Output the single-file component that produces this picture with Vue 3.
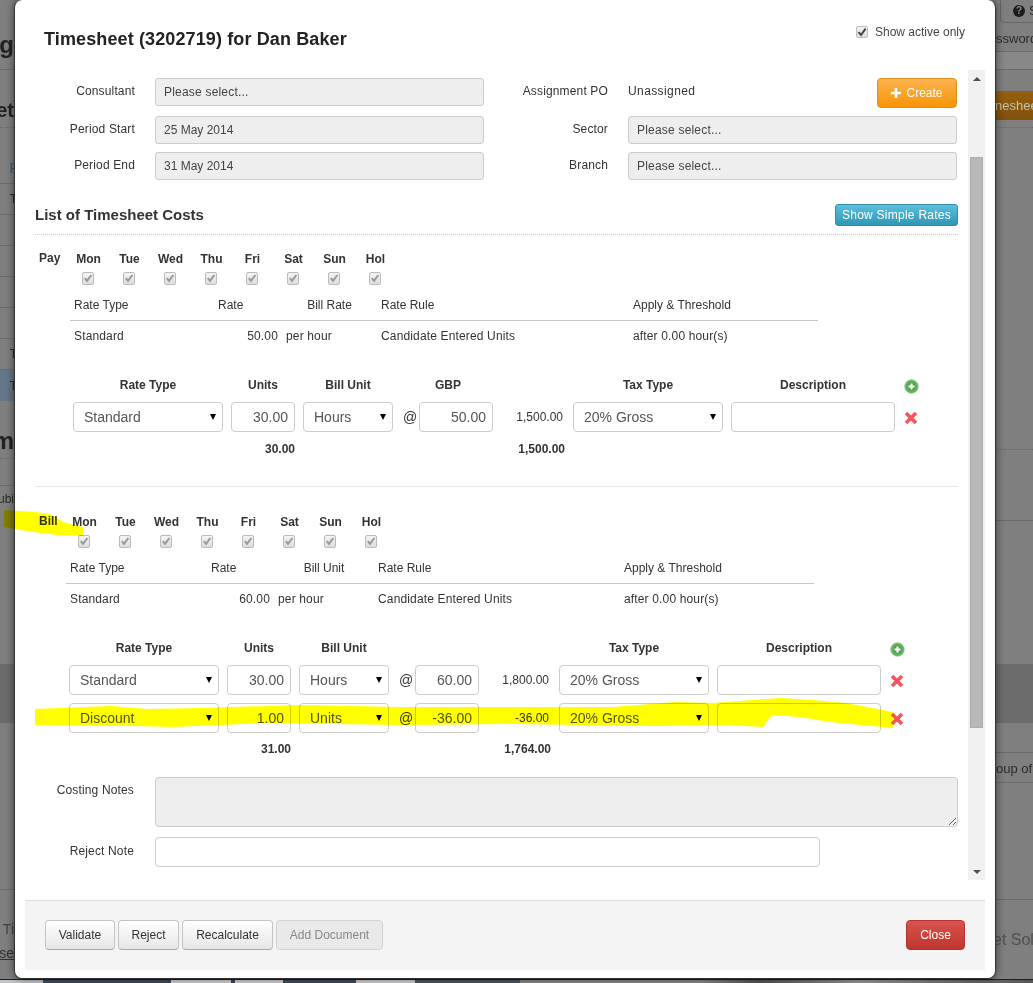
<script setup>
const days = ['Mon', 'Tue', 'Wed', 'Thu', 'Fri', 'Sat', 'Sun', 'Hol']

const blocks = [
  {
    key: 'pay', label: 'Pay', rateHead: 'Bill Rate', rate: '50.00', ccy: 'GBP',
    lines: [{ type: 'Standard', units: '30.00', unit: 'Hours', rate: '50.00', amount: '1,500.00' }],
    totalUnits: '30.00', total: '1,500.00'
  },
  {
    key: 'bill', label: 'Bill', rateHead: 'Bill Unit', rate: '60.00', ccy: '',
    lines: [
      { type: 'Standard', units: '30.00', unit: 'Hours', rate: '60.00', amount: '1,800.00' },
      { type: 'Discount', units: '1.00', unit: 'Units', rate: '-36.00', amount: '-36.00' }
    ],
    totalUnits: '31.00', total: '1,764.00'
  }
]

const leftStrip = [
  { h: 30 }, { h: 30, t: 'ng', c: 'big' }, { h: 10, c: 'line' },
  { h: 25 }, { h: 30, t: 'et', c: 'mid' }, { h: 3, c: 'dots' },
  { h: 28 }, { h: 24, t: 'F', c: 'link' }, { h: 4, c: 'line' },
  { h: 31, a: '2', t: 'T', c: 'row line' },
  { h: 31, a: '4', c: 'row line' },
  { h: 31, a: '6', c: 'row line' },
  { h: 31, a: '1', t: '·', c: 'row line' },
  { h: 31, a: '2', c: 'row line' },
  { h: 31, a: '2', t: 'T', c: 'row line' },
  { h: 31, a: '2', t: 'T', c: 'row selrow' },
  { h: 25 }, { h: 30, t: 'm', c: 'big' }, { h: 3, c: 'dots' },
  { h: 27, c: 'line' },
  { h: 26, t: 'ubi', c: 'txt' },
  { h: 152 },
  { h: 59, c: 'band line' },
  { h: 167, c: 'line' },
  { h: 28 }, { h: 22, t: 'Ti', c: 'fade' }, { h: 26, t: 'se', c: 'under' }
]

const rightStrip = [
  { h: 23, c: 'tab', help: true, t: 'S' },
  { h: 29, t: 'ssword', c: 'r-txt line' },
  { h: 18, c: 'lite line' },
  { h: 21 },
  { h: 29, t: 'neshee', c: 'orange' },
  { h: 8, c: 'dots' },
  { h: 322, c: 'dots' },
  { h: 71, c: 'line' },
  { h: 143 },
  { h: 59, c: 'band line' },
  { h: 30, c: 'line' },
  { h: 30, t: 'oup of i', c: 'r-txt line' },
  { h: 117, c: 'line' },
  { h: 22 }, { h: 36, t: 'et Sol', c: 'r-big' }
]
</script>

<template>
  <div class="screen">
    <div class="stage">
      <aside class="strip strip-left">
        <div v-for="(s, i) in leftStrip" :key="i" class="seg" :class="s.c" :style="{ height: s.h + 'px' }">
          <span v-if="s.a" class="digit">{{ s.a }}</span>
          <span v-if="s.t">{{ s.t }}</span>
        </div>
      </aside>

      <main class="modal">
        <header class="modal-head">
          <h3>Timesheet (3202719) for Dan Baker</h3>
          <label class="active-only">
            <span class="check on">
              <svg viewBox="0 0 12 12"><path d="M2.5 6.2 5 9 9.6 2.6" /></svg>
            </span>
            Show active only
          </label>
        </header>

        <div class="modal-body">
          <div class="content">
            <section class="form">
              <label>Consultant</label>
              <div class="field">Please select...</div>
              <label>Assignment PO</label>
              <div class="po">
                <span>Unassigned</span>
                <button class="btn orange-btn">
                  <svg viewBox="0 0 10 10"><path d="M5 0v10M0 5h10" /></svg>
                  Create
                </button>
              </div>

              <label>Period Start</label>
              <div class="field date">25 May 2014</div>
              <label>Sector</label>
              <div class="field">Please select...</div>

              <label>Period End</label>
              <div class="field date">31 May 2014</div>
              <label>Branch</label>
              <div class="field">Please select...</div>
            </section>

            <div class="section-head">
              <h4>List of Timesheet Costs</h4>
              <button class="btn info-btn">Show Simple Rates</button>
            </div>

            <template v-for="(b, bi) in blocks" :key="b.key">
              <hr v-if="bi" class="sep" />
              <section class="block" :class="b.key">
                <div class="days-row">
                  <strong class="block-label">{{ b.label }}</strong>
                  <div class="days">
                    <div v-for="d in days" :key="d" class="day">
                      <b>{{ d }}</b>
                      <span class="check">
                        <svg viewBox="0 0 12 12"><path d="M2.8 6.2 5 8.8 9.4 3" /></svg>
                      </span>
                    </div>
                  </div>
                </div>

                <div class="rates">
                  <div class="rh">Rate Type</div>
                  <div class="rh">Rate</div>
                  <div class="rh center">{{ b.rateHead }}</div>
                  <div class="rh">Rate Rule</div>
                  <div class="rh">Apply &amp; Threshold</div>
                  <div class="rd">Standard</div>
                  <div class="rd right">{{ b.rate }}</div>
                  <div class="rd">per hour</div>
                  <div class="rd">Candidate Entered Units</div>
                  <div class="rd">after 0.00 hour(s)</div>
                </div>

                <div class="entries">
                  <b class="eh">Rate Type</b>
                  <b class="eh">Units</b>
                  <b class="eh">Bill Unit</b>
                  <span></span>
                  <b class="eh ccy">{{ b.ccy }}</b>
                  <span></span>
                  <b class="eh">Tax Type</b>
                  <b class="eh">Description</b>
                  <span class="icon-cell add">
                    <svg viewBox="0 0 16 16" width="15" height="15">
                      <circle cx="8" cy="8" r="7.2" fill="#63b163" stroke="#8fcb8f" />
                      <circle cx="8" cy="8" r="4.6" fill="#4f9f4f" />
                      <path d="M8 4.8v6.4M4.8 8h6.4" stroke="#fff" stroke-width="2.2" />
                    </svg>
                  </span>

                  <template v-for="l in b.lines" :key="l.type">
                    <div class="cell"><div class="sel">{{ l.type }}<i></i></div></div>
                    <div class="cell"><input class="inp" :value="l.units" readonly /></div>
                    <div class="sel">{{ l.unit }}<i></i></div>
                    <span class="at">@</span>
                    <input class="inp" :value="l.rate" readonly />
                    <span class="amount">{{ l.amount }}</span>
                    <div class="cell"><div class="sel">20% Gross<i></i></div></div>
                    <input class="inp" value="" readonly />
                    <span class="icon-cell del">
                      <svg viewBox="0 0 14 14" width="14" height="14">
                        <path d="M2 2l10 10M12 2 2 12" stroke="#f4545c" stroke-width="3.6" />
                      </svg>
                    </span>
                  </template>

                  <span></span>
                  <b class="tot">{{ b.totalUnits }}</b>
                  <span></span><span></span><span></span>
                  <b class="tot">{{ b.total }}</b>
                </div>
              </section>
            </template>

            <section class="notes">
              <label>Costing Notes</label>
              <textarea class="note-area" readonly></textarea>
              <label class="mid-label">Reject Note</label>
              <input class="note-input" readonly />
            </section>
          </div>

          <div class="scrollbar">
            <i class="arrow up"></i>
            <div class="thumb"></div>
            <i class="arrow down"></i>
          </div>
        </div>

        <footer class="modal-foot">
          <div class="foot-left">
            <button class="btn w-validate">Validate</button>
            <button class="btn w-reject">Reject</button>
            <button class="btn w-recalc">Recalculate</button>
            <button class="btn disabled w-add">Add Document</button>
          </div>
          <button class="btn danger-btn">Close</button>
        </footer>
      </main>

      <aside class="strip strip-right">
        <div v-for="(s, i) in rightStrip" :key="i" class="seg" :class="s.c" :style="{ height: s.h + 'px' }">
          <span v-if="s.help" class="help">?</span>
          <span v-if="s.t">{{ s.t }}</span>
        </div>
      </aside>
    </div>

    <div class="taskbar"></div>

    <svg class="marker" viewBox="0 0 1033 983" width="1033" height="983">
      <polygon points="4,510 35,512 50,514 63,522 83,527 83,536 57,535 33,532 15,529 4,527" />
      <polygon points="35,709 110,706 147,709 200,708 300,705 400,707 613,707 676,702 713,703 780,698 813,700 846,703 893,712 893,728 830,722 800,717 772,715 763,727 726,725 656,726 513,724 400,725 267,723 173,727 133,726 35,725" />
    </svg>
  </div>
</template>

<style>
html, body { margin: 0; padding: 0; background: #7d7d7d; }
</style>

<style scoped>
.screen {
  position: relative;
  width: 1033px;
  height: 983px;
  overflow: hidden;
  font-family: "Liberation Sans", Arial, sans-serif;
  font-size: 12px;
  color: #333;
  background: #7d7d7d;
}
.stage { display: flex; height: 979px; }

/* page dimmed behind the dialog */
.strip { flex: none; overflow: hidden; background: #7f7f7f; color: #262626; }
.strip-left { width: 14px; }
.strip-right { width: 37px; }
.seg { box-sizing: border-box; display: flex; align-items: center; white-space: nowrap; overflow: hidden; }
.strip-left .seg { justify-content: flex-end; }
.line { border-bottom: 1px solid #6b6b6b; }
.dots { border-bottom: 1px dotted #666; }
.big { font-size: 24px; font-weight: bold; color: #222; }
.mid { font-size: 20px; font-weight: bold; color: #222; }
.link { color: #34607f; font-size: 14px; padding-right: 0; }
.link span { margin-right: -4px; }
.strip-left .row { color: #2a2a2a; justify-content: space-between; }
.row span:last-child:not(.digit) { margin-right: -3px; }
.digit { color: #2c6a94; margin-left: -6px; }
.selrow { background: #647788; }
.txt { color: #2b2b2b; }
.band { background: #6c6c6c; }
.fade { color: #454545; font-size: 14px; }
.under { color: #333; font-size: 14px; text-decoration: underline; }
.tab { border: 1px solid #666; border-top: 0; border-right: 0; border-radius: 0 0 0 5px; margin-left: 4px; padding-left: 12px; gap: 4px; color: #222; }
.help { width: 12px; height: 12px; flex: none; border-radius: 50%; background: #1c1c1c; color: #8a8a8a; font: bold 10px/12px "Liberation Sans", sans-serif; text-align: center; }
.r-txt { font-size: 13px; color: #2a2a2a; padding-top: 2px; }
.lite { background: #888; }
.orange { background: linear-gradient(#94600f, #80520c); color: #c8c0a8; font-size: 13px; margin-left: -1px; }
.r-big { font-size: 16px; color: #505050; margin-left: -3px; }

/* dialog */
.modal {
  flex: none;
  box-sizing: border-box;
  width: 982px;
  height: 979px;
  display: flex;
  flex-direction: column;
  position: relative;
  z-index: 1;
  background: #fff;
  border: 1px solid #333;
  border-top: 0;
  border-radius: 8px;
  box-shadow: 0 0 8px rgba(0, 0, 0, .55);
}
.modal-head {
  height: 70px;
  flex: none;
  box-sizing: border-box;
  display: flex;
  justify-content: space-between;
  padding: 0 30px 0 29px;
}
.modal-head h3 { margin: 28px 0 0; font-size: 18px; line-height: 22px; color: #222; letter-spacing: .12px; }
.active-only { display: flex; align-items: center; gap: 7px; height: 14px; margin-top: 25px; color: #444; }

.check {
  box-sizing: border-box;
  display: block;
  width: 12px;
  height: 12px;
  background: linear-gradient(#f4f4f4, #dedede);
  border: 1px solid #bbb;
  border-radius: 2px;
}
.check svg { display: block; width: 12px; height: 12px; margin: -1px; fill: none; stroke: #999; stroke-width: 2; }
.check.on svg { stroke: #444; }

.modal-body { flex: none; height: 810px; margin: 0 10px; display: flex; }
.content { flex: none; width: 943px; box-sizing: border-box; padding: 8px 0 0 10px; overflow: hidden; }

.form {
  display: grid;
  row-gap: 8px;
  width: 923px;
  grid-template-columns: 120px 329px 144px 329px;
}
.form label { padding-right: 20px; text-align: right; line-height: 27px; letter-spacing: .15px; }
.field {
  box-sizing: border-box;
  height: 28px;
  padding-left: 8px;
  line-height: 26px;
  background: #eee;
  border: 1px solid #ccc;
  border-radius: 3px;
  color: #444;
  letter-spacing: .2px;
}
.field.date { letter-spacing: 0; }
.po { display: flex; justify-content: space-between; height: 30px; line-height: 27px; letter-spacing: .4px; }

.btn {
  box-sizing: border-box;
  height: 30px;
  padding: 0;
  font: 12px "Liberation Sans", Arial, sans-serif;
  color: #333;
  background: linear-gradient(#fff, #e6e6e6);
  border: 1px solid #c4c4c4;
  border-bottom-color: #a8a8a8;
  border-radius: 4px;
}
.w-validate { width: 70px; }
.w-reject { width: 61px; }
.w-recalc { width: 91px; }
.w-add { width: 107px; }
.btn.disabled { background: #e9e9e9; color: #888; border-color: #d2d2d2; }
.orange-btn {
  display: flex;
  align-items: center;
  justify-content: center;
  gap: 5px;
  width: 80px;
  color: #fff;
  letter-spacing: 0;
  background: linear-gradient(#fbb450, #f89406);
  border-color: #e0901a;
}
.orange-btn svg { width: 10px; height: 10px; fill: none; stroke: #fff; stroke-width: 2.6; }
.info-btn {
  width: 123px;
  height: 22px;
  color: #fff;
  letter-spacing: .25px;
  background: linear-gradient(#5bc0de, #2f96b4);
  border-color: #2f8fae;
  border-radius: 3px;
}
.danger-btn {
  width: 59px;
  color: #fff;
  background: linear-gradient(#d9534f, #bd362f);
  border-color: #b5332d;
}

.section-head {
  display: flex;
  justify-content: space-between;
  width: 923px;
  height: 31px;
  box-sizing: border-box;
  margin-top: 24px;
  border-bottom: 1px dotted #ccc;
}
.section-head h4 { margin: 0; font-size: 15px; line-height: 21px; color: #333; }

.sep { margin: 28px 0 0; width: 923px; border: 0; border-top: 1px solid #e8e8e8; }

.days-row { display: flex; margin-top: 16px; }
.block.bill .days-row { margin-top: 27px; }
.block-label { margin-left: 4px; line-height: 14px; }
.block.pay .block-label { width: 29px; }
.block.bill .block-label { width: 25px; }
.days { display: grid; grid-template-columns: repeat(8, 41px); }
.day { display: flex; flex-direction: column; align-items: center; }
.day b { display: block; height: 16px; line-height: 16px; margin-bottom: 5px; color: #333; }
.day .check { height: 13px; margin-right: 1px; }

.rates { display: grid; margin-top: 11px; }
.block.pay .rates { margin-left: 35px; grid-template-columns: 144px 68px 95px 252px 189px; }
.block.bill .rates { margin-left: 31px; grid-template-columns: 141px 67px 100px 246px 194px; }
.rh { box-sizing: border-box; height: 25px; line-height: 18px; padding-left: 4px; border-bottom: 1px solid #c8c8c8; }
.rd { height: 18px; line-height: 18px; padding-top: 6px; padding-left: 4px; letter-spacing: .15px; }
.rh.center { text-align: center; padding-left: 0; }
.rd.right { text-align: right; padding: 6px 4px 0 0; }

.entries { display: grid; row-gap: 8px; margin-top: 31px; }
.block.pay .entries { margin-left: 38px; grid-template-columns: 158px 72px 90px 26px 74px 80px 158px 164px 32px; }
.block.bill .entries { margin-left: 34px; grid-template-columns: 158px 72px 90px 26px 64px 80px 158px 164px 32px; }
.eh { height: 18px; line-height: 18px; text-align: center; color: #333; }
.entries .eh:nth-child(1), .entries .eh:nth-child(2), .entries .eh:nth-child(7) { padding-right: 8px; }
.ccy { text-align: left; padding-left: 16px; }
.cell { padding-right: 8px; }
.sel, .inp {
  box-sizing: border-box;
  display: block;
  width: 100%;
  height: 30px;
  font: 14px "Liberation Sans", Arial, sans-serif;
  color: #555;
  background: #fff;
  border: 1px solid #ccc;
  border-radius: 4px;
  outline: 0;
  margin: 0;
}
.sel { position: relative; padding-left: 10px; line-height: 28px; }
.sel i {
  position: absolute;
  right: 6px;
  top: 11px;
  border: 3.5px solid transparent;
  border-top: 6px solid #000;
  border-bottom: 0;
}
.inp { text-align: right; padding: 0 6px; }
.at { text-align: center; font-size: 14px; line-height: 30px; padding-left: 8px; box-sizing: border-box; }
.amount { text-align: right; padding-right: 10px; line-height: 30px; }
.icon-cell { display: flex; align-items: center; justify-content: center; box-sizing: border-box; }
.icon-cell.add { height: 18px; padding-top: 2px; }
.icon-cell.del { padding-top: 2px; }
.tot { height: 18px; line-height: 18px; text-align: right; padding-right: 8px; color: #333; }
.block.bill .tot { margin-top: -1px; }

.notes {
  display: grid;
  grid-template-columns: 120px 803px;
  row-gap: 10px;
  margin-top: 19px;
}
.notes label { padding-right: 21px; text-align: right; padding-top: 6px; letter-spacing: .15px; }
.notes .mid-label { padding-top: 7px; }
.note-area {
  box-sizing: border-box;
  display: block;
  width: 803px;
  height: 50px;
  margin: 0;
  background: #eee;
  border: 1px solid #ccc;
  border-radius: 4px;
  outline: 0;
  resize: both;
}
.note-input {
  box-sizing: border-box;
  display: block;
  width: 665px;
  height: 30px;
  margin: 0;
  background: #fff;
  border: 1px solid #ccc;
  border-radius: 4px;
  outline: 0;
}

.scrollbar {
  flex: none;
  width: 17px;
  display: flex;
  flex-direction: column;
  align-items: center;
  background: #f1f1f1;
}
.thumb { flex: none; width: 13px; height: 571px; margin-top: 76px; background: #b8b8b8; border: 1px solid #adadad; box-sizing: border-box; }
.arrow { flex: none; width: 0; height: 0; border-left: 4px solid transparent; border-right: 4px solid transparent; }
.arrow.up { margin-top: 7px; border-bottom: 4px solid #505050; }
.arrow.down { margin-top: 142px; border-top: 4px solid #505050; }

.modal-foot {
  flex: none;
  box-sizing: border-box;
  height: 70px;
  margin: 20px 10px 0;
  padding: 19px 20px 20px;
  display: flex;
  justify-content: space-between;
  background: #f4f4f4;
  border-top: 1px solid #ddd;
}
.foot-left { display: flex; gap: 3px; }

.taskbar {
  height: 4px;
  background: linear-gradient(90deg, #c2c6ca 0 43px, #3e4e5c 43px 171px, #d0d2d6 171px 231px, #3e4e5c 231px 235px, #d0d2d6 235px 283px, #3e4e5c 283px 356px, #d0d2d6 356px 415px, #4a5866 415px 520px, #8a8a8a 520px 700px, #555 760px, #9a9a9a 860px, #555 1033px);
  border-top: 1px solid #1e1e1e;
  box-sizing: border-box;
}

/* yellow marker scribbles on top of the screenshot */
.marker { position: absolute; left: 0; top: 0; z-index: 2; pointer-events: none; mix-blend-mode: multiply; }
.marker polygon { fill: #ffff00; }
</style>
